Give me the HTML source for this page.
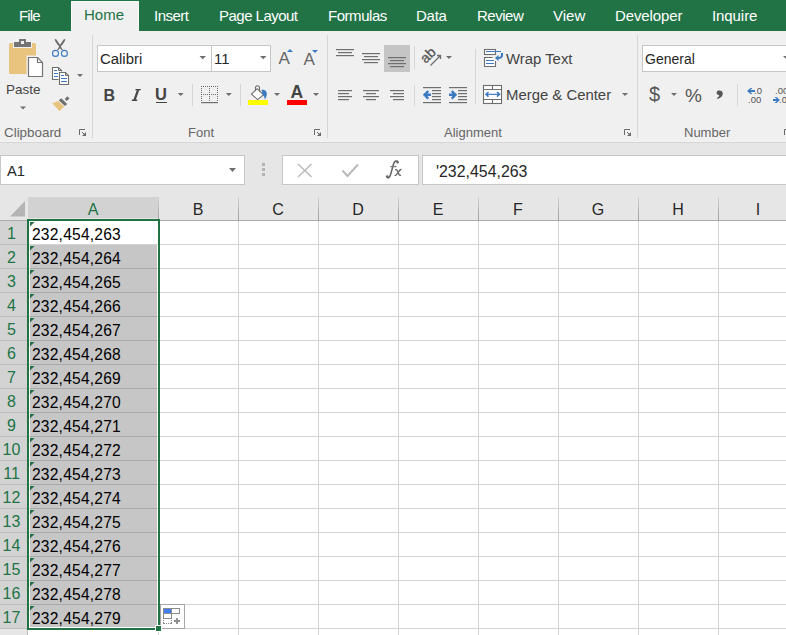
<!DOCTYPE html>
<html><head><meta charset="utf-8">
<style>
*{margin:0;padding:0;box-sizing:border-box}
html,body{width:786px;height:635px;overflow:hidden;background:#fff;font-family:"Liberation Sans",sans-serif}
.a{position:absolute}
.t{position:absolute;white-space:nowrap;line-height:1}
.tab{color:#fff;font-size:15px;top:7.5px}
.sep{position:absolute;width:1px;background:#d6d6d6}
.lbl{color:#666;font-size:13px;top:126px}
.box{position:absolute;background:#fff;border:1px solid #c6c6c6}
.gl{position:absolute;background:#d4d4d4}
.cell{position:absolute;left:32px;color:#000;font-size:15.6px;letter-spacing:0.2px}
svg{position:absolute;overflow:visible}
</style></head><body>
<div class="a" style="left:0;top:0;width:786px;height:31px;background:#217346"></div>
<div class="a" style="left:71px;top:1px;width:68px;height:31px;background:#f0f0f0;border:1px solid #f8f8f8;border-bottom:none"></div>
<div class="t tab" style="left:19px;letter-spacing:-0.83px">File</div>
<div class="t tab" style="left:84px;letter-spacing:0px;color:#217346;top:7px">Home</div>
<div class="t tab" style="left:154px;letter-spacing:-0.5px">Insert</div>
<div class="t tab" style="left:219px;letter-spacing:-0.52px">Page Layout</div>
<div class="t tab" style="left:328px;letter-spacing:-0.46px">Formulas</div>
<div class="t tab" style="left:416px;letter-spacing:-0.27px">Data</div>
<div class="t tab" style="left:477px;letter-spacing:-0.48px">Review</div>
<div class="t tab" style="left:553px;letter-spacing:0px">View</div>
<div class="t tab" style="left:615px;letter-spacing:-0.12px">Developer</div>
<div class="t tab" style="left:712px;letter-spacing:-0.08px">Inquire</div>
<div class="a" style="left:0;top:31px;width:786px;height:111px;background:#f0f0f0"></div>
<div class="a" style="left:0;top:141px;width:786px;height:1px;background:#f3f3f3"></div>
<div class="sep" style="left:92px;top:35px;height:103px"></div>
<div class="sep" style="left:327px;top:35px;height:103px"></div>
<div class="sep" style="left:637px;top:35px;height:103px"></div>
<div class="t lbl" style="left:4px;font-size:13.4px">Clipboard</div>
<div class="t lbl" style="left:188px">Font</div>
<div class="t lbl" style="left:444px">Alignment</div>
<div class="t lbl" style="left:684px">Number</div>
<svg style="left:79px;top:129px" width="8" height="8" viewBox="0 0 8 8"><path d="M0.5 6V0.5H6" fill="none" stroke="#6a6a6a" stroke-width="1"/><path d="M7 7H3L7 3Z" fill="#6a6a6a"/><path d="M3 3L6 6" stroke="#6a6a6a" stroke-width="1"/></svg>
<svg style="left:314px;top:129px" width="8" height="8" viewBox="0 0 8 8"><path d="M0.5 6V0.5H6" fill="none" stroke="#6a6a6a" stroke-width="1"/><path d="M7 7H3L7 3Z" fill="#6a6a6a"/><path d="M3 3L6 6" stroke="#6a6a6a" stroke-width="1"/></svg>
<svg style="left:624px;top:129px" width="8" height="8" viewBox="0 0 8 8"><path d="M0.5 6V0.5H6" fill="none" stroke="#6a6a6a" stroke-width="1"/><path d="M7 7H3L7 3Z" fill="#6a6a6a"/><path d="M3 3L6 6" stroke="#6a6a6a" stroke-width="1"/></svg>
<svg style="left:784px;top:129px" width="8" height="8" viewBox="0 0 8 8"><path d="M0.5 6V0.5H6" fill="none" stroke="#6a6a6a" stroke-width="1"/><path d="M7 7H3L7 3Z" fill="#6a6a6a"/><path d="M3 3L6 6" stroke="#6a6a6a" stroke-width="1"/></svg>
<svg style="left:0;top:31px" width="92" height="111" viewBox="0 31 92 111">
<rect x="9" y="43" width="27" height="31" rx="1.5" fill="#e9c47e"/>
<rect x="13" y="41" width="19" height="7" fill="#f0f0f0"/>
<rect x="14" y="42" width="17" height="5" rx="0.5" fill="#747474"/>
<rect x="19" y="39" width="7" height="4" rx="0.5" fill="#747474"/>
<rect x="21" y="41" width="3" height="3" fill="#f0f0f0"/>
<path d="M26.5 55.5H38L43.5 61V77.5H26.5Z" fill="#f0f0f0"/>
<path d="M28.5 57.5H37.5L42.5 62.5V76.5H28.5Z" fill="#fff" stroke="#747474" stroke-width="1.2"/>
<path d="M37.5 57.5V62.5H42.5" fill="none" stroke="#747474" stroke-width="1.2"/>
<path d="M54.6 39.2Q55.6 38.8 56.4 39.6L61.2 46.6L58.4 50.2L57.2 49.6L59.3 46.6Q55 42 54.6 39.2Z" fill="#6e6e6e"/>
<path d="M65.4 39.2Q64.4 38.8 63.6 39.6L58.8 46.6L61.6 50.2L62.8 49.6L60.7 46.6Q65 42 65.4 39.2Z" fill="#6e6e6e"/>
<circle cx="55.5" cy="53.4" r="3" fill="none" stroke="#3b7ac2" stroke-width="1.1"/>
<circle cx="64.4" cy="53.4" r="3" fill="none" stroke="#3b7ac2" stroke-width="1.1"/>
<path d="M52.5 67.5H58.5L61.5 70.5V79.5H52.5Z" fill="#fff" stroke="#6e6e6e" stroke-width="1.1"/>
<path d="M58.5 67.5V70.5H61.5" fill="none" stroke="#6e6e6e" stroke-width="1"/>
<path d="M54 70.5H57M54 73.5H58M54 76.5H58" stroke="#3b7ac2" stroke-width="1"/>
<path d="M58.5 71.5H65.5L68.5 74.5V84.5H58.5Z" fill="#f0f0f0"/>
<path d="M59.5 72.5H65.5L68.5 75.5V84.5H59.5Z" fill="#fff" stroke="#6e6e6e" stroke-width="1.1"/>
<path d="M65.5 72.5V75.5H68.5" fill="none" stroke="#6e6e6e" stroke-width="1"/>
<path d="M61 75.5H64M61 78.5H67M61 81.5H67" stroke="#3b7ac2" stroke-width="1"/>
<path d="M52.3 103.3L58 101L64.2 106.4L59.5 111.3Z" fill="#e9c47e"/>
<path d="M58.8 100.2L61.2 98.2L67.2 103.9L64.9 106.1Z" fill="#6e6e6e"/>
<path d="M64.8 99L67.4 96.3L69.5 98.4L66.6 101Z" fill="#6e6e6e"/>
<path d="M77 74H83L80 77Z" fill="#6e6e6e"/>
<path d="M20 106.5H26L23 109.5Z" fill="#6e6e6e"/>
</svg>
<div class="t" style="left:6px;top:83px;font-size:13.5px;color:#444">Paste</div>
<div class="box" style="left:97px;top:45px;width:115px;height:27px"></div>
<div class="box" style="left:211px;top:45px;width:60px;height:27px"></div>
<div class="t" style="left:100px;top:52px;font-size:14.9px;color:#262626">Calibri</div>
<div class="t" style="left:214px;top:52px;font-size:14.9px;color:#262626">11</div>
<svg style="left:0;top:0" width="786" height="142" viewBox="0 0 786 142">
<path d="M199.5 56H206.0L202.75 59.25Z" fill="#6e6e6e"/><path d="M260 56H266.5L263.25 59.25Z" fill="#6e6e6e"/>
<path d="M287 52L290 49L293 52Z" fill="#3b7ac2"/>
<path d="M312 50H318L315 53Z" fill="#3b7ac2"/>
<path d="M177.7 93H183.7L180.7 96.0Z" fill="#6e6e6e"/><path d="M225.8 93H231.8L228.8 96.0Z" fill="#6e6e6e"/><path d="M274 93H280L277.0 96.0Z" fill="#6e6e6e"/><path d="M313 93H319L316.0 96.0Z" fill="#6e6e6e"/>
<rect x="248" y="100" width="20" height="5" fill="#ffff00"/>
<rect x="287" y="100" width="20" height="5" fill="#ff0000"/>
<path d="M251.5 94.2L257.2 88.7L263.6 94.8L257.7 99.6Z" fill="#fff" stroke="#6e6e6e" stroke-width="1.1"/>
<path d="M255.5 91V87Q257.5 84.5 259.5 87V92" fill="none" stroke="#6e6e6e" stroke-width="1.1"/>
<path d="M261.5 89.6Q268 89.8 266.6 95.5Q266 98 264.8 99.6Q264.6 96.5 262.8 94.8Z" fill="#3b7ac2"/>
<rect x="201" y="102" width="17" height="1.2" fill="#6e6e6e"/>
<rect x="201" y="86" width="1" height="1" fill="#6e6e6e"/><rect x="201" y="88" width="1" height="1" fill="#6e6e6e"/><rect x="201" y="90" width="1" height="1" fill="#6e6e6e"/><rect x="201" y="92" width="1" height="1" fill="#6e6e6e"/><rect x="201" y="94" width="1" height="1" fill="#6e6e6e"/><rect x="201" y="96" width="1" height="1" fill="#6e6e6e"/><rect x="201" y="98" width="1" height="1" fill="#6e6e6e"/><rect x="201" y="100" width="1" height="1" fill="#6e6e6e"/><rect x="203" y="86" width="1" height="1" fill="#6e6e6e"/><rect x="203" y="94" width="1" height="1" fill="#6e6e6e"/><rect x="205" y="86" width="1" height="1" fill="#6e6e6e"/><rect x="205" y="94" width="1" height="1" fill="#6e6e6e"/><rect x="207" y="86" width="1" height="1" fill="#6e6e6e"/><rect x="207" y="94" width="1" height="1" fill="#6e6e6e"/><rect x="209" y="86" width="1" height="1" fill="#6e6e6e"/><rect x="209" y="88" width="1" height="1" fill="#6e6e6e"/><rect x="209" y="90" width="1" height="1" fill="#6e6e6e"/><rect x="209" y="92" width="1" height="1" fill="#6e6e6e"/><rect x="209" y="94" width="1" height="1" fill="#6e6e6e"/><rect x="209" y="96" width="1" height="1" fill="#6e6e6e"/><rect x="209" y="98" width="1" height="1" fill="#6e6e6e"/><rect x="209" y="100" width="1" height="1" fill="#6e6e6e"/><rect x="211" y="86" width="1" height="1" fill="#6e6e6e"/><rect x="211" y="94" width="1" height="1" fill="#6e6e6e"/><rect x="213" y="86" width="1" height="1" fill="#6e6e6e"/><rect x="213" y="94" width="1" height="1" fill="#6e6e6e"/><rect x="215" y="86" width="1" height="1" fill="#6e6e6e"/><rect x="215" y="94" width="1" height="1" fill="#6e6e6e"/><rect x="217" y="86" width="1" height="1" fill="#6e6e6e"/><rect x="217" y="88" width="1" height="1" fill="#6e6e6e"/><rect x="217" y="90" width="1" height="1" fill="#6e6e6e"/><rect x="217" y="92" width="1" height="1" fill="#6e6e6e"/><rect x="217" y="94" width="1" height="1" fill="#6e6e6e"/><rect x="217" y="96" width="1" height="1" fill="#6e6e6e"/><rect x="217" y="98" width="1" height="1" fill="#6e6e6e"/><rect x="217" y="100" width="1" height="1" fill="#6e6e6e"/></svg>
<div class="t" style="left:278.5px;top:50px;font-size:17px;color:#666">A</div>
<div class="t" style="left:303.5px;top:51px;font-size:17px;color:#666">A</div>
<div class="t" style="left:103.5px;top:88px;font-size:16px;font-weight:bold;color:#444">B</div>
<svg style="left:0;top:0" width="200" height="142"><path d="M135.6 88.9H140.9L140.6 90.3H139.2L135.9 99.6H137.4L137.1 101H131.7L132 99.6H133.5L136.8 90.3H135.3Z" fill="#484848"/></svg>
<div class="t" style="left:155px;top:86px;font-size:16.5px;font-weight:bold;color:#444">U</div>
<div class="a" style="left:156px;top:102px;width:11px;height:1px;background:#444"></div>
<div class="t" style="left:290.5px;top:83.5px;font-size:17.5px;font-weight:bold;color:#444">A</div>
<div class="sep" style="left:192px;top:84px;height:22px"></div>
<div class="sep" style="left:240px;top:84px;height:22px"></div>
<svg style="left:0;top:0" width="786" height="142" viewBox="0 0 786 142">
<rect x="384" y="45" width="26" height="27" fill="#c5c5c5"/>
<rect x="336" y="49" width="18" height="1.2" fill="#6e6e6e"/><rect x="338" y="52" width="14" height="1.2" fill="#6e6e6e"/><rect x="336" y="55" width="18" height="1.2" fill="#6e6e6e"/><rect x="362" y="53" width="18" height="1.2" fill="#6e6e6e"/><rect x="364" y="56" width="14" height="1.2" fill="#6e6e6e"/><rect x="362" y="59" width="18" height="1.2" fill="#6e6e6e"/><rect x="364" y="62" width="14" height="1.2" fill="#6e6e6e"/><rect x="388" y="57" width="18" height="1.2" fill="#6e6e6e"/><rect x="390" y="60" width="14" height="1.2" fill="#6e6e6e"/><rect x="388" y="63" width="18" height="1.2" fill="#6e6e6e"/><rect x="390" y="66" width="14" height="1.2" fill="#6e6e6e"/><rect x="338" y="90" width="14" height="1.2" fill="#6e6e6e"/><rect x="338" y="93" width="11" height="1.2" fill="#6e6e6e"/><rect x="338" y="96" width="14" height="1.2" fill="#6e6e6e"/><rect x="338" y="99" width="11" height="1.2" fill="#6e6e6e"/><rect x="363" y="90" width="16" height="1.2" fill="#6e6e6e"/><rect x="366" y="93" width="10" height="1.2" fill="#6e6e6e"/><rect x="363" y="96" width="16" height="1.2" fill="#6e6e6e"/><rect x="366" y="99" width="10" height="1.2" fill="#6e6e6e"/><rect x="390" y="90" width="14" height="1.2" fill="#6e6e6e"/><rect x="393" y="93" width="11" height="1.2" fill="#6e6e6e"/><rect x="390" y="96" width="14" height="1.2" fill="#6e6e6e"/><rect x="393" y="99" width="11" height="1.2" fill="#6e6e6e"/><rect x="423" y="87" width="18" height="1.2" fill="#6e6e6e"/><rect x="432" y="90" width="9" height="1.2" fill="#6e6e6e"/><rect x="432" y="93" width="9" height="1.2" fill="#6e6e6e"/><rect x="432" y="96" width="9" height="1.2" fill="#6e6e6e"/><rect x="432" y="99" width="9" height="1.2" fill="#6e6e6e"/><rect x="423" y="102" width="18" height="1.2" fill="#6e6e6e"/><rect x="449" y="87" width="18" height="1.2" fill="#6e6e6e"/><rect x="458" y="90" width="9" height="1.2" fill="#6e6e6e"/><rect x="458" y="93" width="9" height="1.2" fill="#6e6e6e"/><rect x="458" y="96" width="9" height="1.2" fill="#6e6e6e"/><rect x="458" y="99" width="9" height="1.2" fill="#6e6e6e"/><rect x="449" y="102" width="18" height="1.2" fill="#6e6e6e"/><path d="M431 94.8H425M428.3 91L424.5 94.8L428.3 98.6" fill="none" stroke="#3b7ac2" stroke-width="2.4"/>
<path d="M449 94.8H455M451.7 91L455.5 94.8L451.7 98.6" fill="none" stroke="#3b7ac2" stroke-width="2.4"/>
<path d="M430.5 65.5L440.5 55.5M437 55.5H440.5V59" fill="none" stroke="#6e6e6e" stroke-width="1.3"/>
<path d="M446 56H452L449.0 59.0Z" fill="#6e6e6e"/><path d="M622 93H628L625.0 96.0Z" fill="#6e6e6e"/><rect x="484.5" y="49.5" width="11" height="5" fill="#fff" stroke="#6e6e6e" stroke-width="1.1"/>
<path d="M492.5 57.5H484.5V66.5H495.5V61" fill="#fff" stroke="#6e6e6e" stroke-width="1.1"/>
<path d="M486 51.5H501M486 60.5H494M486 63.5H494" stroke="#3b7ac2" stroke-width="1.1"/>
<path d="M502 53V55Q502 58 498 58H496.5" fill="none" stroke="#3b7ac2" stroke-width="2"/>
<path d="M495 58L498.5 55V61Z" fill="#3b7ac2"/>
<rect x="483.5" y="85.5" width="18" height="18" fill="#fff" stroke="#6e6e6e" stroke-width="1.1"/>
<path d="M483.5 89.5H501.5M483.5 99.5H501.5M492.5 85.5V89.5M492.5 99.5V103.5" stroke="#6e6e6e" stroke-width="1.1"/>
<path d="M486 94.3H499.5" stroke="#3b7ac2" stroke-width="1.2"/>
<path d="M488.5 92L486 94.3L488.5 96.7M497 92L499.5 94.3L497 96.7" fill="none" stroke="#3b7ac2" stroke-width="1.6"/>
<rect x="475" y="49" width="1" height="55" fill="#d6d6d6"/><rect x="414" y="46" width="1" height="23" fill="#d6d6d6"/><rect x="414" y="85" width="1" height="21" fill="#d6d6d6"/><rect x="737" y="84" width="1" height="22" fill="#d6d6d6"/><path d="M671 93H677L674.0 96.0Z" fill="#6e6e6e"/><path d="M747 90.9L750.5 87.9H752.5L750.3 89.9H755V91.9H750.3L752.5 93.9H750.5Z" fill="#3b7ac2"/><path d="M780 100L776.5 97H774.5L776.7 99H773V101H776.7L774.5 103H776.5Z" fill="#3b7ac2"/></svg>
<div class="t" style="left:419.5px;top:48px;font-size:14px;color:#555;transform:rotate(-45deg);transform-origin:50% 50%;-webkit-text-stroke:0.3px #555">ab</div>
<div class="t" style="left:506px;top:52px;font-size:14.9px;color:#444">Wrap Text</div>
<div class="t" style="left:506px;top:88px;font-size:14.9px;color:#444">Merge &amp; Center</div>
<div class="box" style="left:642px;top:45px;width:150px;height:27px"></div>
<div class="t" style="left:645px;top:52px;font-size:14px;color:#262626">General</div>
<svg style="left:0;top:0" width="786" height="142"><path d="M783 56H789.5L786.25 59.25Z" fill="#6e6e6e"/></svg>
<div class="t" style="left:649px;top:84px;font-size:20px;color:#555">$</div>
<div class="t" style="left:685px;top:86px;font-size:19px;color:#555">%</div>
<svg style="left:0;top:0" width="786" height="142"><path d="M718.5 90.5Q722.5 90 722.8 93.5Q722.8 97 717.5 99L717 98Q719.5 96.5 719.3 95.3Q716.3 94.8 716.6 92.6Q717 90.7 718.5 90.5Z" fill="#555"/></svg>
<div class="t" style="left:754px;top:86px;font-size:9.5px;color:#555">.0</div>
<div class="t" style="left:748px;top:95px;font-size:9.5px;color:#555">.00</div>
<div class="t" style="left:775px;top:86px;font-size:9.5px;color:#555">.00</div>
<div class="t" style="left:779px;top:95px;font-size:9.5px;color:#555">.0</div>
<div class="a" style="left:0;top:142px;width:786px;height:55px;background:#e6e6e6;border-top:1px solid #d5d5d5"></div>
<div class="box" style="left:0px;top:155px;width:245px;height:30px"></div>
<div class="t" style="left:7px;top:164px;font-size:14.7px;color:#262626">A1</div>
<svg style="left:0;top:0" width="786" height="200" viewBox="0 0 786 200"><path d="M229 168H236L232.5 172Z" fill="#6e6e6e"/><rect x="262" y="163" width="3" height="3" fill="#b4b4b4"/><rect x="262" y="168" width="3" height="3" fill="#b4b4b4"/><rect x="262" y="173" width="3" height="3" fill="#b4b4b4"/></svg>
<div class="box" style="left:282px;top:155px;width:137px;height:30px"></div>
<svg style="left:0;top:0" width="786" height="200" viewBox="0 0 786 200"><path d="M298 164L311.5 177M311.5 164L298 177" stroke="#b9b9b9" stroke-width="1.4"/><path d="M342.5 170.5L347.5 176L358 164.5" fill="none" stroke="#b9b9b9" stroke-width="2"/></svg>
<svg style="left:0;top:0" width="786" height="200" viewBox="0 0 786 200">
<path d="M387 177.3Q389.3 178.8 390.6 174.5L393.6 163.8Q394.8 160 397.8 161.2" fill="none" stroke="#626262" stroke-width="1.5"/>
<circle cx="387.2" cy="176.6" r="1.3" fill="#626262"/><circle cx="397.6" cy="162.2" r="1.2" fill="#626262"/>
<path d="M390.3 166.6H396.5" stroke="#777" stroke-width="1.2"/>
<path d="M395.2 169.8Q396.8 169 397.6 171.5L399.2 174.6Q399.8 175.6 401 175M401.4 169.6Q400.8 169.2 399.6 170.5L396.4 174.6Q395.5 175.8 394.6 175.2" fill="none" stroke="#626262" stroke-width="1.3"/>
</svg>
<div class="box" style="left:422px;top:155px;width:370px;height:30px"></div>
<div class="t" style="left:436px;top:164px;font-size:15.9px;color:#262626">'232,454,263</div>
<div class="a" style="left:0;top:197px;width:786px;height:24px;background:#e6e6e6"></div>
<svg style="left:0;top:197px" width="28" height="24"><polygon points="25,4 25,19.5 10,19.5" fill="#b4b4b4"/></svg>
<div class="a" style="left:28px;top:197px;width:130px;height:21px;background:#d2d2d2"></div>
<div class="t" style="left:28px;width:130px;text-align:center;top:202px;font-size:16px;color:#217346">A</div>
<div class="a" style="left:158px;top:197px;width:80px;height:21px;background:#e6e6e6"></div>
<div class="t" style="left:158px;width:80px;text-align:center;top:202px;font-size:16px;color:#262626">B</div>
<div class="a" style="left:238px;top:197px;width:80px;height:21px;background:#e6e6e6"></div>
<div class="t" style="left:238px;width:80px;text-align:center;top:202px;font-size:16px;color:#262626">C</div>
<div class="a" style="left:318px;top:197px;width:80px;height:21px;background:#e6e6e6"></div>
<div class="t" style="left:318px;width:80px;text-align:center;top:202px;font-size:16px;color:#262626">D</div>
<div class="a" style="left:398px;top:197px;width:80px;height:21px;background:#e6e6e6"></div>
<div class="t" style="left:398px;width:80px;text-align:center;top:202px;font-size:16px;color:#262626">E</div>
<div class="a" style="left:478px;top:197px;width:80px;height:21px;background:#e6e6e6"></div>
<div class="t" style="left:478px;width:80px;text-align:center;top:202px;font-size:16px;color:#262626">F</div>
<div class="a" style="left:558px;top:197px;width:80px;height:21px;background:#e6e6e6"></div>
<div class="t" style="left:558px;width:80px;text-align:center;top:202px;font-size:16px;color:#262626">G</div>
<div class="a" style="left:638px;top:197px;width:80px;height:21px;background:#e6e6e6"></div>
<div class="t" style="left:638px;width:80px;text-align:center;top:202px;font-size:16px;color:#262626">H</div>
<div class="a" style="left:718px;top:197px;width:80px;height:21px;background:#e6e6e6"></div>
<div class="t" style="left:718px;width:80px;text-align:center;top:202px;font-size:16px;color:#262626">I</div>
<div class="a" style="left:0;top:220px;width:786px;height:1px;background:#ababab"></div>
<div class="a" style="left:158px;top:197px;width:1px;height:23px;background:linear-gradient(#d2d2d2,#9e9e9e)"></div>
<div class="a" style="left:238px;top:197px;width:1px;height:23px;background:linear-gradient(#d2d2d2,#9e9e9e)"></div>
<div class="a" style="left:318px;top:197px;width:1px;height:23px;background:linear-gradient(#d2d2d2,#9e9e9e)"></div>
<div class="a" style="left:398px;top:197px;width:1px;height:23px;background:linear-gradient(#d2d2d2,#9e9e9e)"></div>
<div class="a" style="left:478px;top:197px;width:1px;height:23px;background:linear-gradient(#d2d2d2,#9e9e9e)"></div>
<div class="a" style="left:558px;top:197px;width:1px;height:23px;background:linear-gradient(#d2d2d2,#9e9e9e)"></div>
<div class="a" style="left:638px;top:197px;width:1px;height:23px;background:linear-gradient(#d2d2d2,#9e9e9e)"></div>
<div class="a" style="left:718px;top:197px;width:1px;height:23px;background:linear-gradient(#d2d2d2,#9e9e9e)"></div>
<div class="a" style="left:798px;top:197px;width:1px;height:23px;background:linear-gradient(#d2d2d2,#9e9e9e)"></div>
<div class="gl" style="left:158px;top:629px;width:1px;height:6px"></div>
<div class="gl" style="left:238px;top:221px;width:1px;height:414px"></div>
<div class="gl" style="left:318px;top:221px;width:1px;height:414px"></div>
<div class="gl" style="left:398px;top:221px;width:1px;height:414px"></div>
<div class="gl" style="left:478px;top:221px;width:1px;height:414px"></div>
<div class="gl" style="left:558px;top:221px;width:1px;height:414px"></div>
<div class="gl" style="left:638px;top:221px;width:1px;height:414px"></div>
<div class="gl" style="left:718px;top:221px;width:1px;height:414px"></div>
<div class="gl" style="left:0;top:244px;width:786px;height:1px"></div>
<div class="gl" style="left:0;top:268px;width:786px;height:1px"></div>
<div class="gl" style="left:0;top:292px;width:786px;height:1px"></div>
<div class="gl" style="left:0;top:316px;width:786px;height:1px"></div>
<div class="gl" style="left:0;top:340px;width:786px;height:1px"></div>
<div class="gl" style="left:0;top:364px;width:786px;height:1px"></div>
<div class="gl" style="left:0;top:388px;width:786px;height:1px"></div>
<div class="gl" style="left:0;top:412px;width:786px;height:1px"></div>
<div class="gl" style="left:0;top:436px;width:786px;height:1px"></div>
<div class="gl" style="left:0;top:460px;width:786px;height:1px"></div>
<div class="gl" style="left:0;top:484px;width:786px;height:1px"></div>
<div class="gl" style="left:0;top:508px;width:786px;height:1px"></div>
<div class="gl" style="left:0;top:532px;width:786px;height:1px"></div>
<div class="gl" style="left:0;top:556px;width:786px;height:1px"></div>
<div class="gl" style="left:0;top:580px;width:786px;height:1px"></div>
<div class="gl" style="left:0;top:604px;width:786px;height:1px"></div>
<div class="gl" style="left:0;top:628px;width:786px;height:1px"></div>
<div class="gl" style="left:0;top:652px;width:786px;height:1px"></div>
<div class="a" style="left:0;top:221px;width:27px;height:408px;background:#d3d3d3"></div>
<div class="a" style="left:0;top:629px;width:28px;height:6px;background:#e6e6e6"></div>
<div class="a" style="left:27px;top:629px;width:1px;height:6px;background:#bdbdbd"></div>
<div class="a" style="left:0;top:244px;width:27px;height:1px;background:#bdbdbd"></div>
<div class="a" style="left:0;top:268px;width:27px;height:1px;background:#bdbdbd"></div>
<div class="a" style="left:0;top:292px;width:27px;height:1px;background:#bdbdbd"></div>
<div class="a" style="left:0;top:316px;width:27px;height:1px;background:#bdbdbd"></div>
<div class="a" style="left:0;top:340px;width:27px;height:1px;background:#bdbdbd"></div>
<div class="a" style="left:0;top:364px;width:27px;height:1px;background:#bdbdbd"></div>
<div class="a" style="left:0;top:388px;width:27px;height:1px;background:#bdbdbd"></div>
<div class="a" style="left:0;top:412px;width:27px;height:1px;background:#bdbdbd"></div>
<div class="a" style="left:0;top:436px;width:27px;height:1px;background:#bdbdbd"></div>
<div class="a" style="left:0;top:460px;width:27px;height:1px;background:#bdbdbd"></div>
<div class="a" style="left:0;top:484px;width:27px;height:1px;background:#bdbdbd"></div>
<div class="a" style="left:0;top:508px;width:27px;height:1px;background:#bdbdbd"></div>
<div class="a" style="left:0;top:532px;width:27px;height:1px;background:#bdbdbd"></div>
<div class="a" style="left:0;top:556px;width:27px;height:1px;background:#bdbdbd"></div>
<div class="a" style="left:0;top:580px;width:27px;height:1px;background:#bdbdbd"></div>
<div class="a" style="left:0;top:604px;width:27px;height:1px;background:#bdbdbd"></div>
<div class="a" style="left:0;top:628px;width:27px;height:1px;background:#bdbdbd"></div>
<div class="a" style="left:30px;top:245px;width:127px;height:382px;background:#c6c6c6"></div>
<div class="a" style="left:30px;top:268px;width:127px;height:1px;background:#a9a9a9"></div>
<div class="a" style="left:30px;top:292px;width:127px;height:1px;background:#a9a9a9"></div>
<div class="a" style="left:30px;top:316px;width:127px;height:1px;background:#a9a9a9"></div>
<div class="a" style="left:30px;top:340px;width:127px;height:1px;background:#a9a9a9"></div>
<div class="a" style="left:30px;top:364px;width:127px;height:1px;background:#a9a9a9"></div>
<div class="a" style="left:30px;top:388px;width:127px;height:1px;background:#a9a9a9"></div>
<div class="a" style="left:30px;top:412px;width:127px;height:1px;background:#a9a9a9"></div>
<div class="a" style="left:30px;top:436px;width:127px;height:1px;background:#a9a9a9"></div>
<div class="a" style="left:30px;top:460px;width:127px;height:1px;background:#a9a9a9"></div>
<div class="a" style="left:30px;top:484px;width:127px;height:1px;background:#a9a9a9"></div>
<div class="a" style="left:30px;top:508px;width:127px;height:1px;background:#a9a9a9"></div>
<div class="a" style="left:30px;top:532px;width:127px;height:1px;background:#a9a9a9"></div>
<div class="a" style="left:30px;top:556px;width:127px;height:1px;background:#a9a9a9"></div>
<div class="a" style="left:30px;top:580px;width:127px;height:1px;background:#a9a9a9"></div>
<div class="a" style="left:30px;top:604px;width:127px;height:1px;background:#a9a9a9"></div>
<div class="t" style="left:0;width:23px;text-align:center;top:226px;font-size:16px;color:#217346">1</div>
<div class="t cell" style="top:226.5px">232,454,263</div>
<svg style="left:30px;top:222px" width="6" height="6"><polygon points="0,0 4.6,0 0,4.6" fill="#217346"/></svg>
<div class="t" style="left:0;width:23px;text-align:center;top:250px;font-size:16px;color:#217346">2</div>
<div class="t cell" style="top:250.5px">232,454,264</div>
<svg style="left:30px;top:246px" width="6" height="6"><polygon points="0,0 4.6,0 0,4.6" fill="#217346"/></svg>
<div class="t" style="left:0;width:23px;text-align:center;top:274px;font-size:16px;color:#217346">3</div>
<div class="t cell" style="top:274.5px">232,454,265</div>
<svg style="left:30px;top:270px" width="6" height="6"><polygon points="0,0 4.6,0 0,4.6" fill="#217346"/></svg>
<div class="t" style="left:0;width:23px;text-align:center;top:298px;font-size:16px;color:#217346">4</div>
<div class="t cell" style="top:298.5px">232,454,266</div>
<svg style="left:30px;top:294px" width="6" height="6"><polygon points="0,0 4.6,0 0,4.6" fill="#217346"/></svg>
<div class="t" style="left:0;width:23px;text-align:center;top:322px;font-size:16px;color:#217346">5</div>
<div class="t cell" style="top:322.5px">232,454,267</div>
<svg style="left:30px;top:318px" width="6" height="6"><polygon points="0,0 4.6,0 0,4.6" fill="#217346"/></svg>
<div class="t" style="left:0;width:23px;text-align:center;top:346px;font-size:16px;color:#217346">6</div>
<div class="t cell" style="top:346.5px">232,454,268</div>
<svg style="left:30px;top:342px" width="6" height="6"><polygon points="0,0 4.6,0 0,4.6" fill="#217346"/></svg>
<div class="t" style="left:0;width:23px;text-align:center;top:370px;font-size:16px;color:#217346">7</div>
<div class="t cell" style="top:370.5px">232,454,269</div>
<svg style="left:30px;top:366px" width="6" height="6"><polygon points="0,0 4.6,0 0,4.6" fill="#217346"/></svg>
<div class="t" style="left:0;width:23px;text-align:center;top:394px;font-size:16px;color:#217346">8</div>
<div class="t cell" style="top:394.5px">232,454,270</div>
<svg style="left:30px;top:390px" width="6" height="6"><polygon points="0,0 4.6,0 0,4.6" fill="#217346"/></svg>
<div class="t" style="left:0;width:23px;text-align:center;top:418px;font-size:16px;color:#217346">9</div>
<div class="t cell" style="top:418.5px">232,454,271</div>
<svg style="left:30px;top:414px" width="6" height="6"><polygon points="0,0 4.6,0 0,4.6" fill="#217346"/></svg>
<div class="t" style="left:0;width:23px;text-align:center;top:442px;font-size:16px;color:#217346">10</div>
<div class="t cell" style="top:442.5px">232,454,272</div>
<svg style="left:30px;top:438px" width="6" height="6"><polygon points="0,0 4.6,0 0,4.6" fill="#217346"/></svg>
<div class="t" style="left:0;width:23px;text-align:center;top:466px;font-size:16px;color:#217346">11</div>
<div class="t cell" style="top:466.5px">232,454,273</div>
<svg style="left:30px;top:462px" width="6" height="6"><polygon points="0,0 4.6,0 0,4.6" fill="#217346"/></svg>
<div class="t" style="left:0;width:23px;text-align:center;top:490px;font-size:16px;color:#217346">12</div>
<div class="t cell" style="top:490.5px">232,454,274</div>
<svg style="left:30px;top:486px" width="6" height="6"><polygon points="0,0 4.6,0 0,4.6" fill="#217346"/></svg>
<div class="t" style="left:0;width:23px;text-align:center;top:514px;font-size:16px;color:#217346">13</div>
<div class="t cell" style="top:514.5px">232,454,275</div>
<svg style="left:30px;top:510px" width="6" height="6"><polygon points="0,0 4.6,0 0,4.6" fill="#217346"/></svg>
<div class="t" style="left:0;width:23px;text-align:center;top:538px;font-size:16px;color:#217346">14</div>
<div class="t cell" style="top:538.5px">232,454,276</div>
<svg style="left:30px;top:534px" width="6" height="6"><polygon points="0,0 4.6,0 0,4.6" fill="#217346"/></svg>
<div class="t" style="left:0;width:23px;text-align:center;top:562px;font-size:16px;color:#217346">15</div>
<div class="t cell" style="top:562.5px">232,454,277</div>
<svg style="left:30px;top:558px" width="6" height="6"><polygon points="0,0 4.6,0 0,4.6" fill="#217346"/></svg>
<div class="t" style="left:0;width:23px;text-align:center;top:586px;font-size:16px;color:#217346">16</div>
<div class="t cell" style="top:586.5px">232,454,278</div>
<svg style="left:30px;top:582px" width="6" height="6"><polygon points="0,0 4.6,0 0,4.6" fill="#217346"/></svg>
<div class="t" style="left:0;width:23px;text-align:center;top:610px;font-size:16px;color:#217346">17</div>
<div class="t cell" style="top:610.5px">232,454,279</div>
<svg style="left:30px;top:606px" width="6" height="6"><polygon points="0,0 4.6,0 0,4.6" fill="#217346"/></svg>
<div class="a" style="left:27px;top:219px;width:133px;height:411px;border:2px solid #217346"></div>
<div class="a" style="left:160px;top:604px;width:25px;height:25px;background:#fff;border:1px solid #a6a6a6"></div>
<div class="a" style="left:155px;top:625px;width:7px;height:7px;background:#fff"></div>
<div class="a" style="left:156px;top:626px;width:5px;height:5px;background:#217346"></div>
<svg style="left:0;top:0" width="786" height="635" viewBox="0 0 786 635">
<rect x="163.5" y="608.5" width="16" height="5" fill="#fff" stroke="#8c8c8c" stroke-width="1"/>
<rect x="164" y="609" width="7.5" height="4" fill="#3f7ff2"/>
<path d="M171.5 608.5V613.5" stroke="#8c8c8c"/>
<rect x="163.5" y="613.5" width="8" height="5" fill="#fff" stroke="#8c8c8c" stroke-width="1"/>
<rect x="163" y="620" width="1" height="1" fill="#8c8c8c"/><rect x="163" y="622" width="1" height="1" fill="#8c8c8c"/><rect x="163" y="623" width="1" height="1" fill="#8c8c8c"/><rect x="164" y="623" width="1" height="1" fill="#8c8c8c"/><rect x="166" y="623" width="1" height="1" fill="#8c8c8c"/><rect x="168" y="623" width="1" height="1" fill="#8c8c8c"/><rect x="170" y="623" width="1" height="1" fill="#8c8c8c"/><rect x="171" y="623" width="1" height="1" fill="#8c8c8c"/><rect x="171" y="622" width="1" height="1" fill="#8c8c8c"/><rect x="171" y="620" width="1" height="1" fill="#8c8c8c"/>
<path d="M174 621H180M177 618V624" stroke="#8c8c8c" stroke-width="1.8"/>
</svg>
</body></html>
